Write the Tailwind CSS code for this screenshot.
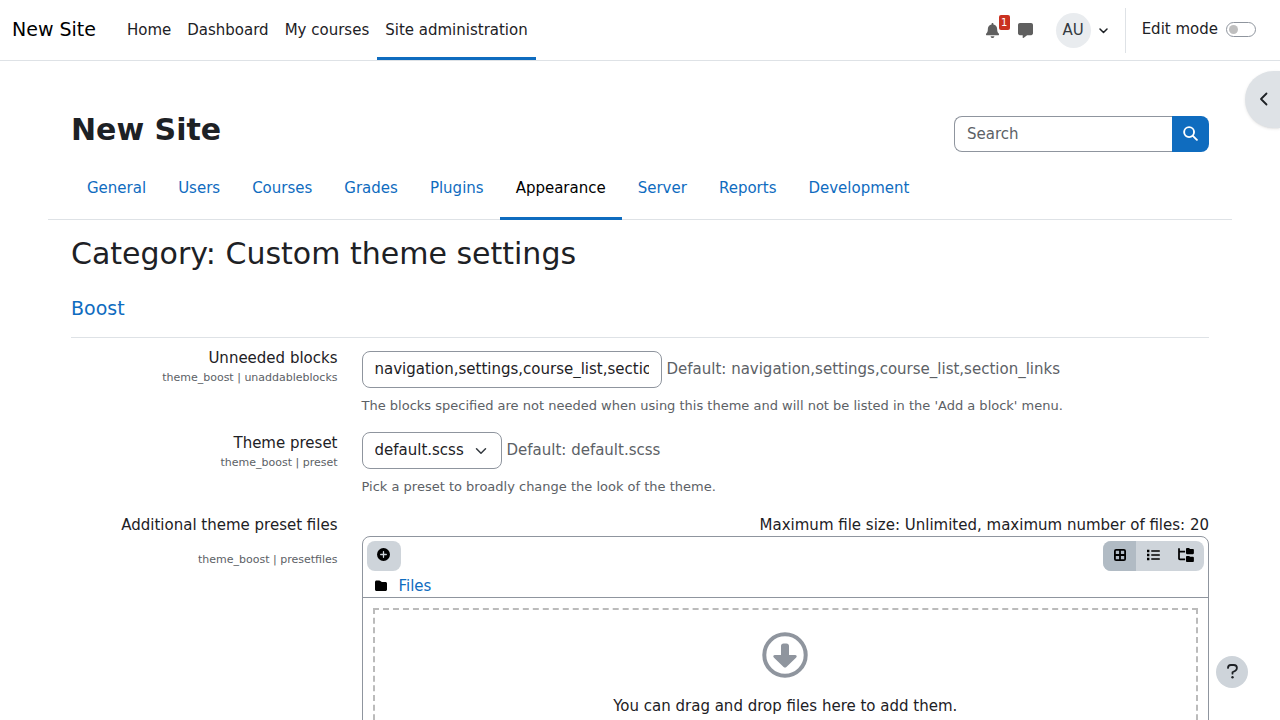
<!DOCTYPE html>
<html lang="en">
<head>
<meta charset="utf-8">
<title>Category: Custom theme settings | New Site</title>
<script src="https://cdn.jsdelivr.net/npm/@tailwindcss/browser@4"></script>
</head>
<body class="flex h-screen flex-col overflow-hidden bg-white font-['DejaVu_Sans',sans-serif] text-[15px] leading-[22px] text-[#1d2125]">

<!-- Top bar -->
<header class="flex h-[61px] shrink-0 items-stretch border-b border-[#dee2e6] pr-6 pl-3">
  <a href="#" class="mr-[23px] flex items-center pb-[2px] text-[19px] text-black">New Site</a>
  <nav aria-label="Site" class="flex">
    <a href="#" class="flex items-center px-2">Home</a>
    <a href="#" class="flex items-center px-2">Dashboard</a>
    <a href="#" class="flex items-center px-2">My courses</a>
    <a href="#" aria-current="page" class="flex items-center border-b-3 border-[#0f6cbf] px-2 pt-[3px]">Site administration</a>
  </nav>
  <div class="ml-auto flex items-center">
    <button type="button" aria-label="Notifications" class="relative mr-[18px] block text-[#5f5f5f]">
      <svg class="h-[15px] w-[15px]" viewBox="0 0 512 512" fill="currentColor"><path d="M256 0c-18 0-32 14-32 32v19C151 66 96 130 96 208v19c0 47-17 92-48 127l-8 9c-8 9-10 23-5 34s16 19 29 19h384c13 0 24-7 29-19s3-25-5-34l-8-9c-31-35-48-80-48-127v-19c0-77-55-142-128-157V32c0-18-14-32-32-32zm45 493c12-12 19-28 19-45H192c0 17 7 33 19 45s28 19 45 19 33-7 45-19z"/></svg>
      <span class="absolute -top-2 left-[14px] h-[15px] w-[11px] rounded-xs bg-[#ca3120] text-center text-[10px] leading-[15px] text-white">1</span>
    </button>
    <button type="button" aria-label="Messages" class="mr-[23px] text-[#5f5f5f]">
      <svg class="h-[15px] w-[15px]" viewBox="0 0 512 512" fill="currentColor"><path d="M64 0C29 0 0 29 0 64v288c0 35 29 64 64 64h96v80c0 6 3 12 9 14s12 2 17-1l124-93h138c35 0 64-29 64-64V64c0-35-29-64-64-64H64z"/></svg>
    </button>
    <button type="button" class="flex items-center" aria-label="User menu">
      <span class="flex h-[35px] w-[35px] items-center justify-center rounded-full bg-[#e9ecef] text-[#343a40]">AU</span>
      <svg class="mr-[17px] ml-2 h-[9px] w-[9px]" viewBox="0 0 9 9" fill="none" stroke="#1d2125" stroke-width="1.5" stroke-linecap="round" stroke-linejoin="round"><path d="M1 3l3.500 3.500L8 3"/></svg>
    </button>
    <div class="h-[45px] w-px bg-[#dee2e6]"></div>
    <label for="editmode" class="ml-4 pb-[2px]">Edit mode</label>
    <input id="editmode" type="checkbox" role="switch" class="ml-2 mb-px h-[15px] w-[30px] appearance-none rounded-full border border-[#8f959e] bg-white before:mt-[2px] before:ml-[2px] before:block before:h-[9px] before:w-[9px] before:rounded-full before:bg-[#bfbfbf]">
  </div>
</header>

<main class="min-h-0 flex-1 overflow-y-auto px-12 [scrollbar-width:none]">
  <div class="flex items-center justify-between px-[23px] pt-[50px]">
    <h1 class="pb-[3px] text-[30px] leading-[36px] font-bold">New Site</h1>
    <form class="mt-[5px] flex h-9">
      <input type="search" aria-label="Search" placeholder="Search" class="w-[218px] rounded-l-lg border border-r-0 border-[#8f959e] px-3 placeholder:text-[#5c6166]">
      <button type="button" aria-label="Search" class="flex w-[37px] items-center justify-center rounded-r-lg bg-[#0f6cbf]">
        <svg class="mb-px h-[15px] w-[15px]" viewBox="0 0 16 16" fill="none" stroke="#fff" stroke-width="2" stroke-linecap="round"><circle cx="6.500" cy="6.500" r="5.300"/><path d="M10.500 10.500L14.800 14.800"/></svg>
      </button>
    </form>
  </div>

  <nav aria-label="Administration" class="mt-1 flex h-16 border-b border-[#dee2e6] px-[23px] text-[#0f6cbf]">
    <a href="#" class="flex h-16 items-center px-4">General</a>
    <a href="#" class="flex h-16 items-center px-4">Users</a>
    <a href="#" class="flex h-16 items-center px-4">Courses</a>
    <a href="#" class="flex h-16 items-center px-4">Grades</a>
    <a href="#" class="flex h-16 items-center px-4">Plugins</a>
    <a href="#" aria-current="page" class="flex h-16 items-center border-b-3 border-[#0f6cbf] px-4 pt-[3px] text-black">Appearance</a>
    <a href="#" class="flex h-16 items-center px-4">Server</a>
    <a href="#" class="flex h-16 items-center px-4">Reports</a>
    <a href="#" class="flex h-16 items-center px-4">Development</a>
  </nav>

  <form class="px-[23px]">
    <h2 class="mt-4 text-[30px] leading-[36px]">Category: Custom theme settings</h2>
    <h3 class="mt-6 border-b border-[#dee2e6] pb-[17px] text-[19px] leading-6"><a href="#" class="text-[#0f6cbf]">Boost</a></h3>

    <div class="-mx-3 mt-[9px] flex">
      <div class="w-1/4 px-3 text-right">
        <label for="blocks" class="block">Unneeded blocks</label>
        <span class="mt-px block text-[11px] leading-4 text-[#5c6166]">theme_boost | unaddableblocks</span>
      </div>
      <div class="w-3/4 px-3 pt-1">
        <div class="flex items-center gap-[5px]">
          <input id="blocks" type="text" value="navigation,settings,course_list,section_links" class="h-[37px] w-[300px] rounded-lg border border-[#8f959e] px-3 pb-[2px]">
          <span class="pb-[2px] text-[#5c6166]">Default: navigation,settings,course_list,section_links</span>
        </div>
        <p class="mt-2 text-[13px] leading-5 text-[#5c6166]">The blocks specified are not needed when using this theme and will not be listed in the 'Add a block' menu.</p>
      </div>
    </div>

    <div class="-mx-3 mt-4 flex">
      <div class="w-1/4 px-3 text-right">
        <label for="preset" class="block">Theme preset</label>
        <span class="mt-px block text-[11px] leading-4 text-[#5c6166]">theme_boost | preset</span>
      </div>
      <div class="w-3/4 px-3">
        <div class="flex items-center gap-[5px]">
          <div class="relative">
            <select id="preset" class="h-[37px] w-[140px] appearance-none rounded-lg border border-[#8f959e] bg-white px-3 pb-[2px]"><option>default.scss</option><option>plain.scss</option></select>
            <svg class="pointer-events-none absolute top-[13px] right-[15px] h-3 w-3" viewBox="0 0 16 16" fill="none" stroke="#343a40" stroke-width="2" stroke-linecap="round" stroke-linejoin="round"><path d="M2 5l6 6 6-6"/></svg>
          </div>
          <span class="pb-[2px] text-[#5c6166]">Default: default.scss</span>
        </div>
        <p class="mt-2 text-[13px] leading-5 text-[#5c6166]">Pick a preset to broadly change the look of the theme.</p>
      </div>
    </div>

    <div class="-mx-3 mt-4 flex">
      <div class="w-1/4 px-3 pt-px text-right">
        <p>Additional theme preset files</p>
        <span class="mt-4 block text-[11px] leading-4 text-[#5c6166]">theme_boost | presetfiles</span>
      </div>
      <div class="w-3/4 px-3 pt-px">
        <p class="text-right">Maximum file size: Unlimited, maximum number of files: 20</p>
        <div class="rounded-t-lg border border-[#8f959e]">
          <div class="flex justify-between p-1 pb-0">
            <button type="button" aria-label="Add" class="flex h-[30px] w-[34px] items-center justify-center rounded-lg bg-[#ced4da] pb-[3px]">
              <svg class="h-[13px] w-[13px]" viewBox="0 0 14 14"><circle cx="7" cy="7" r="7" fill="#000"/><path d="M7 4v6M4 7h6" stroke="#ced4da" stroke-width="1.400" stroke-linecap="round"/></svg>
            </button>
            <div class="flex overflow-hidden rounded-lg bg-[#ced4da]">
              <button type="button" aria-label="Icons view" class="flex h-[30px] w-[33px] items-center justify-center bg-[#b1bbc4] pb-[2px]">
                <svg class="h-3 w-3" viewBox="0 0 12 12" fill="none" stroke="#000" stroke-width="1.800"><rect x=".9" y=".9" width="10.200" height="10.200" rx="1.200"/><path d="M6 1v10M1 6h10"/></svg>
              </button>
              <button type="button" aria-label="List view" class="flex h-[30px] w-[35px] items-center justify-center pb-[2px]">
                <svg class="h-3 w-[13px]" viewBox="0 0 13 12"><path d="M4.800 2h7.500M4.800 6h7.500M4.800 10h7.500" stroke="#000" stroke-width="1.500" stroke-linecap="round"/><path d="M0 .8h2.400v2.400H0zM0 4.800h2.400v2.400H0zM0 8.800h2.400v2.400H0z"/></svg>
              </button>
              <button type="button" aria-label="Tree view" class="flex h-[30px] w-[33px] items-center pb-[2px] pl-[7px]">
                <svg class="h-[14px] w-4" viewBox="0 0 576 512"><path d="M64 32C64 14 50 0 32 0S0 14 0 32v352c0 35 29 64 64 64h192v-64H64V160h192V96H64V32zm224 160c0 18 14 32 32 32h224c18 0 32-14 32-32V64c0-18-14-32-32-32h-98c-9 0-17-3-23-9L409 9c-6-6-14-9-22-9h-67c-18 0-32 14-32 32v160zm0 288c0 18 14 32 32 32h224c18 0 32-14 32-32V352c0-18-14-32-32-32h-98c-9 0-17-3-23-9l-14-14c-6-6-14-9-22-9h-67c-18 0-32 14-32 32v160z"/></svg>
              </button>
            </div>
          </div>
          <div class="flex items-center pt-1 pl-3">
            <svg class="mr-3 h-3 w-3" viewBox="0 0 12 12"><path d="M1.500.5h2.800c.4 0 .8.200 1.100.5l.6.600c.3.300.6.400 1 .4h3.500C11.300 2 12 2.700 12 3.500V9.500c0 .8-.7 1.500-1.500 1.500h-9C.7 11 0 10.300 0 9.500V2C0 1.200.7.500 1.500.5z"/></svg>
            <a href="#" class="text-[#0f6cbf]">Files</a>
          </div>
          <div class="border-t border-[#8f959e] p-[10px]">
            <div class="flex flex-col items-center border-2 border-dashed border-[#bbbbbb] pt-[22px] pb-10">
              <svg class="h-[46px] w-[46px]" viewBox="0 0 46 46"><circle cx="23" cy="23" r="20.700" fill="none" stroke="#8f959e" stroke-width="4"/><path d="M21.500 11.500h3c1.500 0 2.500 1 2.500 2.500v9h6c1.800 0 2.300 1.600 1 2.800l-9.600 9.100c-.9.800-1.900.8-2.800 0L12 25.800c-1.300-1.200-.8-2.800 1-2.800h6v-9c0-1.500 1-2.500 2.500-2.500z" fill="#8f959e"/></svg>
              <p class="mt-[17px]">You can drag and drop files here to add them.</p>
            </div>
          </div>
        </div>
      </div>
    </div>
  </form>
</main>

<!-- Floating controls -->
<button type="button" aria-label="Open block drawer" class="fixed top-[71px] right-0 flex h-[57px] w-[35px] items-center rounded-l-full bg-[#dee2e6] pl-[14px] shadow">
  <svg class="mb-[2px] h-[14px] w-[9px]" viewBox="0 0 9 14" fill="none" stroke="#1d2125" stroke-width="1.800" stroke-linecap="round" stroke-linejoin="round"><path d="M7.500 1.500L2 7l5.500 5.500"/></svg>
</button>
<button type="button" aria-label="Help" class="fixed right-8 bottom-8 flex h-8 w-8 items-center justify-center rounded-full bg-[#ced4da]">
  <svg class="mb-px h-[15px] w-[11px]" viewBox="0 0 11 15"><path d="M1 3.900C1 2.300 2.300 1 3.900 1h2.900C8.500 1 9.900 2.400 9.900 4.100c0 1.100-.6 2.100-1.500 2.600L5.500 8.300v1.400" fill="none" stroke="#1d2125" stroke-width="1.800" stroke-linecap="round" stroke-linejoin="round"/><circle cx="5.500" cy="13.300" r="1.200" fill="#1d2125"/></svg>
</button>
</body>
</html>
